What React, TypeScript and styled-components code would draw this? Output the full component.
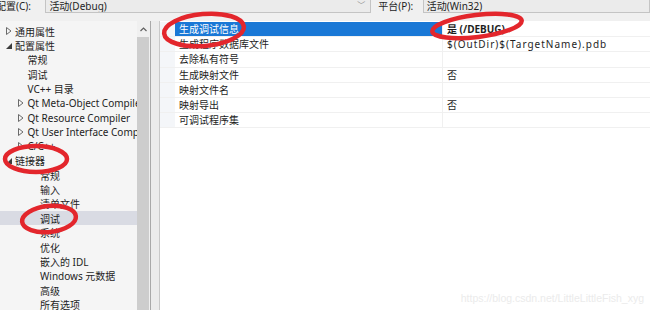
import React from 'react';
import styled, { createGlobalStyle } from 'styled-components';

const GlobalStyle = createGlobalStyle`
  html, body {
    margin: 0;
    padding: 0;
    width: 650px;
    height: 310px;
    overflow: hidden;
    background: #f0f0f0;
    font-family: 'Noto Sans', 'Noto Sans CJK SC', sans-serif;
    font-size: 10px;
    color: #1e1e1e;
  }
`;

const Page = styled.div`
  position: relative;
  width: 650px;
  height: 310px;
  overflow: hidden;
`;

const TopBar = styled.div`
  display: flex;
  align-items: flex-start;
  height: 14px;
`;

const Label = styled.span<{ $w: number; $ml?: number }>`
  width: ${(p) => p.$w}px;
  margin-left: ${(p) => p.$ml ?? 0}px;
  line-height: 12px;
  white-space: nowrap;
`;

const Combo = styled.div<{ $w: number }>`
  position: relative;
  box-sizing: border-box;
  width: ${(p) => p.$w}px;
  height: 13px;
  background: #ebebeb;
  border: 1px solid #c4c4c4;
  border-top: none;
  padding-left: 3px;
  line-height: 12px;
  white-space: nowrap;
  overflow: hidden;
`;

const Chevron = styled.span`
  position: absolute;
  right: 5px;
  top: -1px;
  color: #8a8a8a;
  font-size: 8px;
`;

const Body = styled.div`
  display: flex;
  margin-top: 7px;
  height: 289px;
`;

const Tree = styled.div`
  width: 137px;
  padding-top: 3px;
  background: #f5f5f5;
  overflow: hidden;
`;

const Node = styled.div<{ $level: number; $selected?: boolean }>`
  display: flex;
  align-items: center;
  height: 14.4px;
  padding-left: ${(p) => 2 + p.$level * 12.5}px;
  background: ${(p) => (p.$selected ? '#d9dbe3' : 'transparent')};
  white-space: nowrap;
`;

const Toggle = styled.span`
  display: inline-flex;
  align-items: center;
  justify-content: center;
  width: 13px;
  flex: none;
`;

const ScrollBar = styled.div`
  display: flex;
  flex-direction: column;
  width: 13px;
  background: #f0f0f0;
`;

const ScrollArrow = styled.div`
  height: 16px;
  display: flex;
  align-items: center;
  justify-content: center;
`;

const Thumb = styled.div`
  flex: 1;
  margin: 0 1px 0 0;
  background: #cdcdcd;
`;

const Splitter = styled.div`
  width: 10px;
  border-left: 1px solid #a9a9a9;
  border-right: 1px solid #c9c9c9;
  background: #ececec;
  box-sizing: border-box;
`;

const Grid = styled.div`
  flex: 1;
  background: #ffffff;
  padding-top: 1px;
`;

const Row = styled.div`
  display: flex;
  height: 15.2px;
  line-height: 15px;
  border-bottom: 1px solid #f0f0f0;
  box-sizing: border-box;
`;

const Margin = styled.div`
  width: 15px;
  flex: none;
  background: #f4f6f9;
`;

const NameCell = styled.div<{ $selected?: boolean }>`
  width: 268px;
  flex: none;
  padding-left: 4px;
  box-sizing: border-box;
  border-right: 1px solid #f0f0f0;
  background: ${(p) => (p.$selected ? '#1a78d6' : 'transparent')};
  color: ${(p) => (p.$selected ? '#ffffff' : '#1e1e1e')};
  white-space: nowrap;
`;

const ValueCell = styled.div<{ $bold?: boolean }>`
  flex: 1;
  padding-left: 4px;
  font-weight: ${(p) => (p.$bold ? 700 : 400)};
  letter-spacing: ${(p) => (p.$bold ? 0 : 1)}px;
  white-space: nowrap;
`;

const Marks = styled.svg`
  position: absolute;
  left: 0;
  top: 0;
  pointer-events: none;
`;

const Watermark = styled.div`
  position: absolute;
  right: 6px;
  bottom: 6px;
  color: #ebebeb;
  font-family: 'Liberation Sans', sans-serif;
  font-size: 10.5px;
`;

type TreeItem = { label: string; level: number; toggle?: 'open' | 'closed'; selected?: boolean };

const treeItems: TreeItem[] = [
  { label: '通用属性', level: 0, toggle: 'closed' },
  { label: '配置属性', level: 0, toggle: 'open' },
  { label: '常规', level: 1 },
  { label: '调试', level: 1 },
  { label: 'VC++ 目录', level: 1 },
  { label: 'Qt Meta-Object Compiler', level: 1, toggle: 'closed' },
  { label: 'Qt Resource Compiler', level: 1, toggle: 'closed' },
  { label: 'Qt User Interface Compiler', level: 1, toggle: 'closed' },
  { label: 'C/C++', level: 1, toggle: 'closed' },
  { label: '链接器', level: 0, toggle: 'open' },
  { label: '常规', level: 2 },
  { label: '输入', level: 2 },
  { label: '清单文件', level: 2 },
  { label: '调试', level: 2, selected: true },
  { label: '系统', level: 2 },
  { label: '优化', level: 2 },
  { label: '嵌入的 IDL', level: 2 },
  { label: 'Windows 元数据', level: 2 },
  { label: '高级', level: 2 },
  { label: '所有选项', level: 2 },
];

const props: { name: string; value: string; selected?: boolean }[] = [
  { name: '生成调试信息', value: '是 (/DEBUG)', selected: true },
  { name: '生成程序数据库文件', value: '$(OutDir)$(TargetName).pdb' },
  { name: '去除私有符号', value: '' },
  { name: '生成映射文件', value: '否' },
  { name: '映射文件名', value: '' },
  { name: '映射导出', value: '否' },
  { name: '可调试程序集', value: '' },
];

const ToggleIcon = ({ kind }: { kind?: 'open' | 'closed' }) => (
  <Toggle>
    {kind === 'closed' && (
      <svg width="6" height="8" viewBox="0 0 6 8">
        <path d="M0.5 0.5 L5 4 L0.5 7.5 Z" fill="none" stroke="#6a6a6a" strokeWidth="1" />
      </svg>
    )}
    {kind === 'open' && (
      <svg width="6" height="6" viewBox="0 0 6 6">
        <path d="M6 0 L6 6 L0 6 Z" fill="#3c3c3c" />
      </svg>
    )}
  </Toggle>
);

export default function App() {
  return (
    <Page>
      <GlobalStyle />
      <TopBar>
        <Label $w={50} $ml={-4}>配置(C):</Label>
        <Combo $w={330}>
          活动(Debug)
          <Chevron>﹀</Chevron>
        </Combo>
        <Label $w={45} $ml={7}>平台(P):</Label>
        <Combo $w={230}>活动(Win32)</Combo>
      </TopBar>
      <Body>
        <Tree>
          {treeItems.map((item, i) => (
            <Node key={i} $level={item.level} $selected={item.selected}>
              <ToggleIcon kind={item.toggle} />
              {item.label}
            </Node>
          ))}
        </Tree>
        <ScrollBar>
          <ScrollArrow>
            <svg width="7" height="5" viewBox="0 0 7 5">
              <path d="M0.5 4 L3.5 1 L6.5 4" fill="none" stroke="#606060" strokeWidth="1.2" />
            </svg>
          </ScrollArrow>
          <Thumb />
        </ScrollBar>
        <Splitter />
        <Grid>
          {props.map((p, i) => (
            <Row key={i}>
              <Margin />
              <NameCell $selected={p.selected}>{p.name}</NameCell>
              <ValueCell $bold={p.selected}>{p.value}</ValueCell>
            </Row>
          ))}
        </Grid>
      </Body>
      <Marks width="650" height="310" viewBox="0 0 650 310">
        <g fill="none" stroke="#e3262c" strokeWidth="4.5">
          <ellipse cx="204" cy="30" rx="40" ry="16" transform="rotate(-5 204 30)" />
          <ellipse cx="477" cy="26" rx="45" ry="11" transform="rotate(-7 477 26)" />
          <ellipse cx="36" cy="159" rx="31" ry="13" />
          <ellipse cx="49" cy="219" rx="27" ry="13" transform="rotate(-6 49 219)" />
        </g>
      </Marks>
      <Watermark>https://blog.csdn.net/LittleLittleFish_xyg</Watermark>
    </Page>
  );
}
